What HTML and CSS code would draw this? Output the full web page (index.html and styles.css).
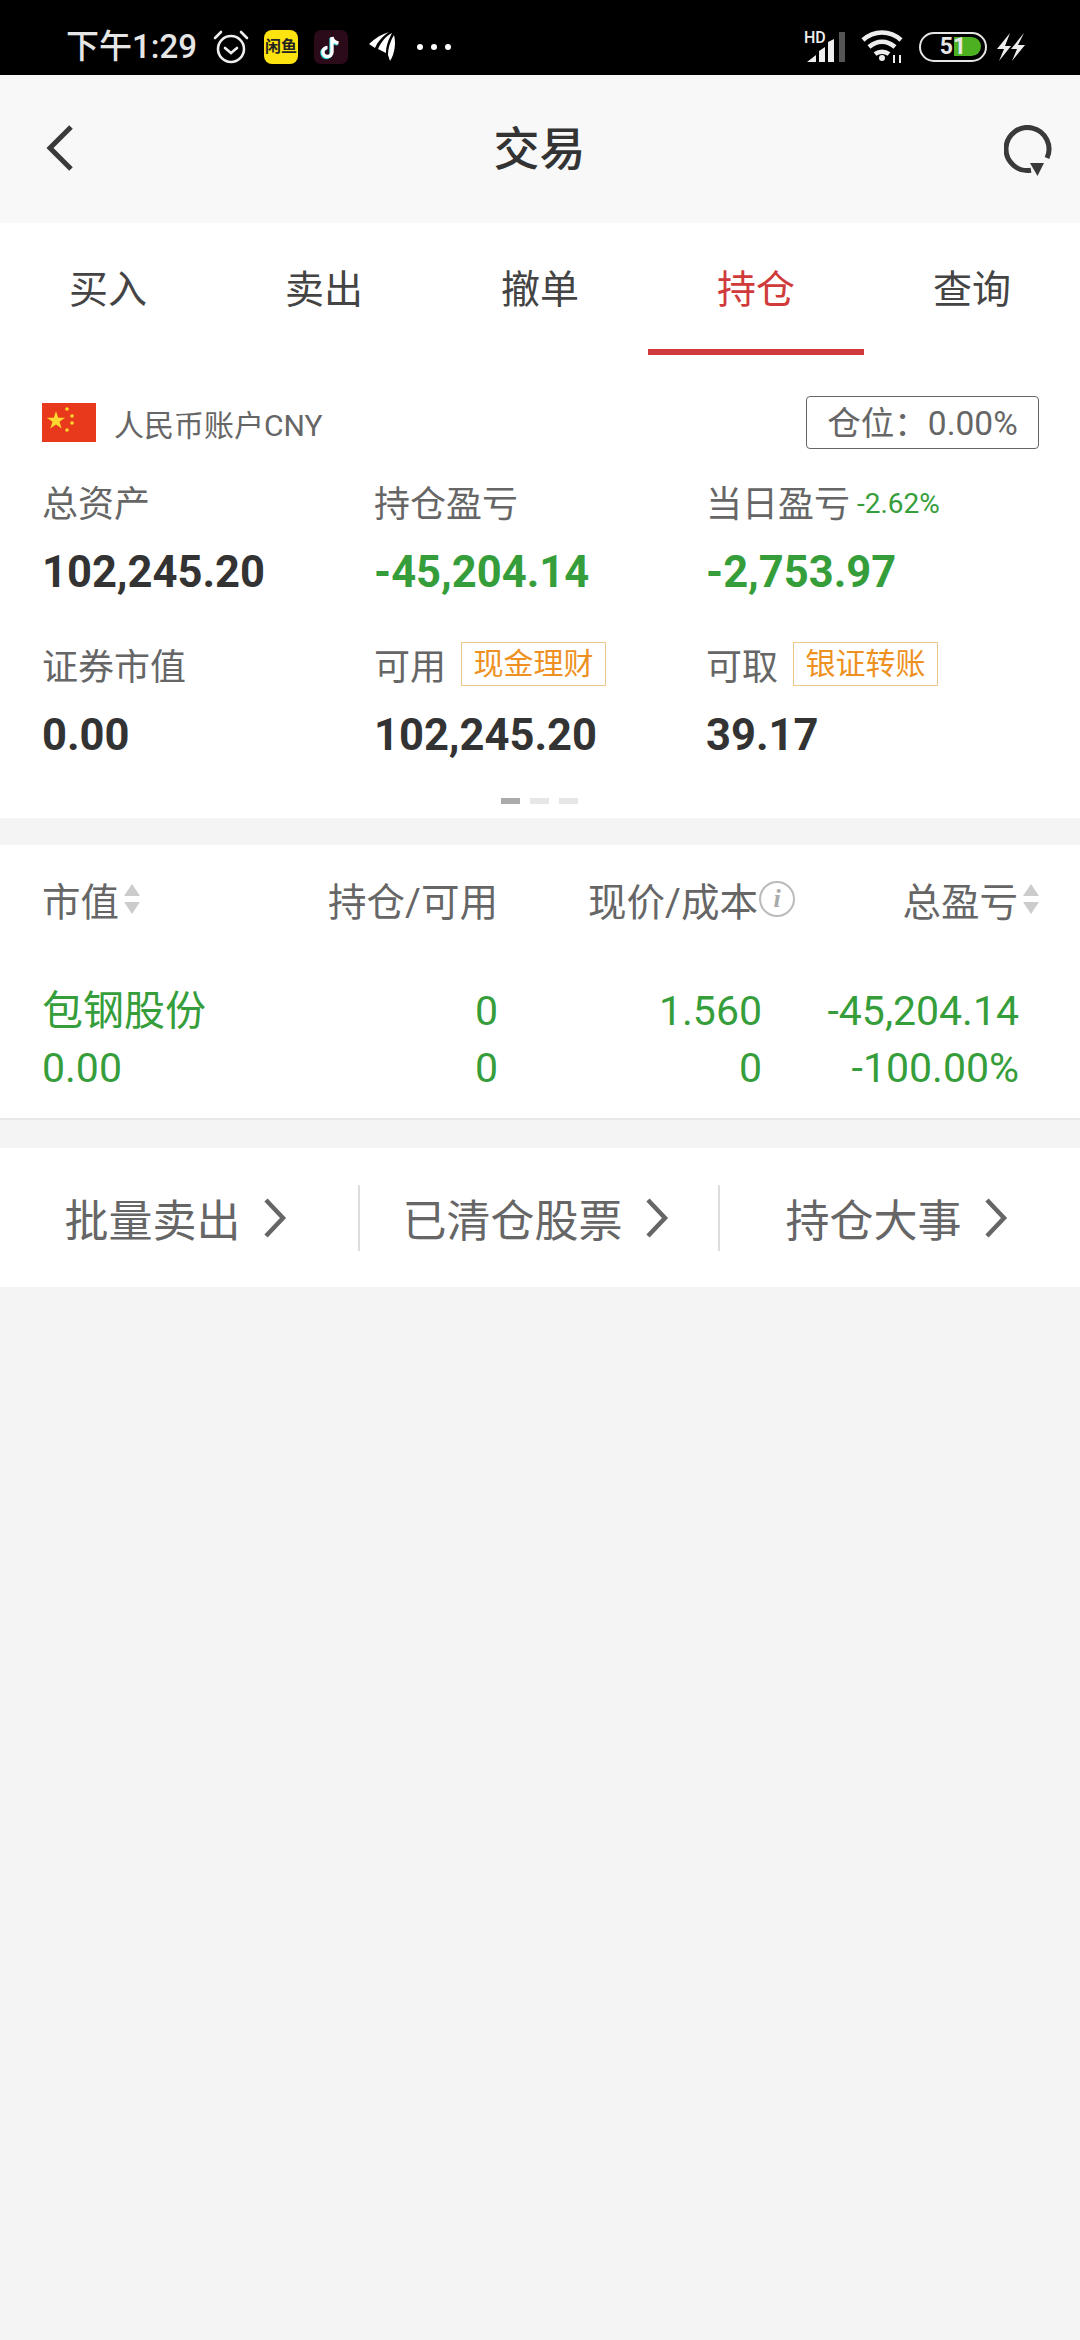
FILE: index.html
```html
<!DOCTYPE html>
<html>
<head>
  <meta charset="UTF-8">
  <title>交易</title>
  <meta name="viewport" content="width=device-width, initial-scale=1.0">
  <link rel="stylesheet" href="styles.css">
</head>
<body>
  <div class="status-bar">
    <span class="clock">下午1:29</span>
    <svg class="st-icon st-alarm" viewBox="0 0 36 36" width="36" height="36" fill="none" stroke="#eee" stroke-width="2.600">
      <circle cx="18" cy="20" r="13"/>
      <path d="M12 19l6 5 6-5M2 9l6-6M34 9l-6-6" stroke-linecap="round"/>
    </svg>
    <span class="st-app st-yellow">闲鱼</span>
    <svg class="st-icon st-tiktok" viewBox="0 0 34 34" width="34" height="34">
      <rect width="34" height="34" rx="7" fill="#2b0a1a"/>
      <path d="M18 7v15a4.500 4.500 0 1 1-4.500-4.500M18 7c.5 3.500 3 5.500 6.500 6" fill="none" stroke="#2cd5dc" stroke-width="3.400" transform="translate(-1 1)"/>
      <path d="M18 7v15a4.500 4.500 0 1 1-4.500-4.500M18 7c.5 3.500 3 5.500 6.500 6" fill="none" stroke="#fff" stroke-width="3.400"/>
    </svg>
    <svg class="st-icon st-wing" viewBox="0 0 28 32" width="28" height="32" fill="#fff">
      <path d="M1 13C7 7 14 3 21 1 15 5 10 10 7 17z"/>
      <path d="M10 18C13 11 18 5 24 2 21 8 18 14 18 22z"/>
      <path d="M20 24C20 16 23 9 26 4 28 12 27 22 22 30z"/>
    </svg>
    <span class="st-more"><i></i><i></i><i></i></span>
    <span class="st-right">
      <span class="st-signal">
        <b>HD</b>
        <svg viewBox="0 0 40 30" width="40" height="30">
          <path d="M1 30l9-7v7zM13 30V19l6-4v15zM22 30V10l6-3v23z" fill="#eee"/>
          <rect x="33" y="0" width="6" height="30" fill="#555"/>
        </svg>
      </span>
      <svg class="st-wifi" viewBox="0 0 46 36" width="46" height="36" fill="none" stroke="#eee" stroke-width="4.500">
        <path d="M3 11C14 1 30 1 41 11M9 18c8-7 18-7 26 0M15 25c4-3 10-3 14 0"/>
        <circle cx="22" cy="29" r="3" fill="#eee" stroke="none"/>
        <path d="M34 34v-8M40 34v-8" stroke-width="2"/>
      </svg>
      <span class="st-battery"><span class="st-charge"></span><span class="st-level">51</span></span>
      <svg class="st-bolt" viewBox="0 0 30 30" width="30" height="30" fill="#eee">
        <path d="M14 1L1 17h7L3 29l12-15H9zM28 1L15 17h6l-5 12 13-16h-7z"/>
      </svg>
    </span>
  </div>

  <div class="nav-bar">
    <svg class="nav-back" viewBox="0 0 30 48" width="30" height="48" fill="none" stroke="#3a3a3a" stroke-width="5">
      <path d="M26 2L5 23l21 21"/>
    </svg>
    <h1>交易</h1>
    <svg class="nav-refresh" viewBox="0 0 50 52" width="50" height="52" fill="none">
      <path d="M27 45.200A21.500 21.500 0 1 1 43 33" stroke="#3a3a3a" stroke-width="5"/>
      <path d="M26 38h14l-6.500 13z" fill="#3a3a3a"/>
    </svg>
  </div>

  <div class="tabs">
    <a>买入</a>
    <a>卖出</a>
    <a>撤单</a>
    <a class="active">持仓</a>
    <a>查询</a>
  </div>

  <section class="account">
    <div class="account-head">
      <svg class="flag" viewBox="0 0 54 39" width="54" height="39">
        <rect width="54" height="39" fill="#e8391c"/>
        <path d="M14 8l2.200 6.700h7l-5.700 4.100 2.200 6.700-5.700-4.100-5.700 4.100 2.200-6.700-5.700-4.100h7z" fill="#fbd92f"/>
        <circle cx="25" cy="6" r="1.800" fill="#fbd92f"/>
        <circle cx="30" cy="13" r="1.800" fill="#fbd92f"/>
        <circle cx="30" cy="20" r="1.800" fill="#fbd92f"/>
        <circle cx="25" cy="27" r="1.800" fill="#fbd92f"/>
      </svg>
      <span class="account-name">人民币账户CNY</span>
      <span class="position">仓位：0.00%</span>
    </div>

    <div class="stats">
      <div class="stat">
        <div class="stat-label">总资产</div>
        <div class="stat-value">102,245.20</div>
      </div>
      <div class="stat">
        <div class="stat-label">持仓盈亏</div>
        <div class="stat-value green">-45,204.14</div>
      </div>
      <div class="stat">
        <div class="stat-label">当日盈亏<small class="green">-2.62%</small></div>
        <div class="stat-value green">-2,753.97</div>
      </div>
      <div class="stat">
        <div class="stat-label">证券市值</div>
        <div class="stat-value">0.00</div>
      </div>
      <div class="stat">
        <div class="stat-label">可用<span class="tag">现金理财</span></div>
        <div class="stat-value">102,245.20</div>
      </div>
      <div class="stat">
        <div class="stat-label">可取<span class="tag">银证转账</span></div>
        <div class="stat-value">39.17</div>
      </div>
    </div>

    <div class="dots"><i class="on"></i><i></i><i></i></div>
  </section>

  <section class="holdings">
    <div class="row row-head">
      <div class="c1">市值<span class="sort"><i class="up"></i><i class="down"></i></span></div>
      <div class="c2">持仓/可用</div>
      <div class="c3">现价/成本<span class="info">i</span></div>
      <div class="c4">总盈亏<span class="sort"><i class="up"></i><i class="down"></i></span></div>
    </div>
    <div class="row row-stock">
      <div class="c1">包钢股份</div>
      <div class="c2">0</div>
      <div class="c3">1.560</div>
      <div class="c4">-45,204.14</div>
    </div>
    <div class="row row-stock">
      <div class="c1">0.00</div>
      <div class="c2">0</div>
      <div class="c3">0</div>
      <div class="c4">-100.00%</div>
    </div>
  </section>

  <div class="actions">
    <a class="action a1">批量卖出<svg viewBox="0 0 24 40" width="24" height="40" fill="none" stroke="#666" stroke-width="4.500"><path d="M3 2l17 18L3 38"/></svg></a>
    <a class="action a2">已清仓股票<svg viewBox="0 0 24 40" width="24" height="40" fill="none" stroke="#666" stroke-width="4.500"><path d="M3 2l17 18L3 38"/></svg></a>
    <a class="action a3">持仓大事<svg viewBox="0 0 24 40" width="24" height="40" fill="none" stroke="#666" stroke-width="4.500"><path d="M3 2l17 18L3 38"/></svg></a>
  </div>
</body>
</html>
```

FILE: styles.css
```css
html, body { margin: 0; padding: 0; }
body {
  width: 1080px;
  height: 2340px;
  overflow: hidden;
  background-color: #f4f4f4;
  color: #666;
  font-family: Roboto, "Noto Sans CJK SC", sans-serif;
}
a { display: block; }

/* status bar */
.status-bar {
  height: 75px;
  box-sizing: border-box;
  background-color: #000;
  display: flex;
  align-items: center;
  padding: 19px 54px 0 66px;
  color: #eee;
}
.clock { width: 147px; font-size: 33px; font-weight: 500; line-height: 40px; color: #e6e6e6; white-space: nowrap; }
.st-icon { display: block; flex: none; }
.st-yellow {
  width: 34px;
  height: 34px;
  margin-left: 15px;
  border-radius: 8px;
  background-color: #fde30f;
  color: #222;
  font-size: 16px;
  font-weight: 700;
  line-height: 34px;
  text-align: center;
  white-space: nowrap;
  overflow: hidden;
}
.st-tiktok { margin-left: 16px; }
.st-wing { margin-left: 20px; }
.st-more { display: flex; gap: 8px; margin-left: 21px; }
.st-more i { width: 6px; height: 6px; border-radius: 50%; background-color: #fff; }
.st-right { margin-left: auto; display: flex; align-items: center; }
.st-signal { position: relative; width: 42px; height: 34px; }
.st-signal b { position: absolute; left: 0; top: 0; font-size: 16px; font-weight: 500; line-height: 16px; color: #eee; }
.st-signal svg { position: absolute; left: 2px; top: 2px; }
.st-wifi { margin-left: 14px; }
.st-battery {
  position: relative;
  width: 68px;
  height: 30px;
  box-sizing: border-box;
  margin-left: 13px;
  border: 2.500px solid #e6e6e6;
  border-radius: 15px;
  overflow: hidden;
}
.st-charge { position: absolute; left: 33px; top: 3px; width: 27px; height: 19px; border-radius: 0 10px 10px 0; background-color: #4cb020; }
.st-level { position: absolute; left: 0; right: 0; top: 0; font-size: 23px; font-weight: 700; line-height: 25px; text-align: center; color: #e6e6e6; }
.st-bolt { margin-left: 9px; }

/* nav bar */
.nav-bar {
  height: 148px;
  background-color: #f8f8f8;
  display: flex;
  align-items: center;
  justify-content: space-between;
  padding: 0 26px 0 45px;
}
.nav-bar h1 { margin: 0; font-size: 46px; font-weight: 500; line-height: 60px; color: #333; }
.nav-back { margin-top: -1px; }
.nav-refresh { margin-top: 4px; }

/* tabs */
.tabs { display: flex; height: 132px; background-color: #fff; }
.tabs a {
  width: 216px;
  height: 132px;
  box-sizing: border-box;
  font-size: 39px;
  line-height: 135px;
  text-align: center;
  color: #444;
}
.tabs a.active { color: #d03a3a; border-bottom: 6px solid #d03a3a; }

/* account */
.account { height: 463px; box-sizing: border-box; background-color: #fff; padding: 41px 41px 0 42px; }
.account-head { display: flex; align-items: center; height: 53px; }
.flag { display: block; flex: none; }
.account-name { margin-left: 18px; font-size: 30px; color: #666; }
.position {
  margin-left: auto;
  width: 233px;
  height: 53px;
  box-sizing: border-box;
  border: 1.500px solid #666;
  border-radius: 4px;
  font-size: 33.500px;
  line-height: 53px;
  text-align: center;
  color: #666;
  white-space: nowrap;
}
.stats { display: grid; grid-template-columns: 332px 332px 1fr; grid-auto-rows: 163px; margin-top: 27px; }
.stat { display: flex; flex-direction: column; }
.stat-label { display: flex; align-items: center; height: 50px; font-size: 36px; color: #666; white-space: nowrap; }
.stat-label small { font-size: 28px; margin-top: 5px; margin-left: 7px; }
.stat-value { margin-top: 22px; font-size: 43.500px; font-weight: 700; line-height: 50px; color: #333; }
.green { color: #359e3b !important; }
.tag {
  margin-left: 15px;
  width: 145px;
  height: 44px;
  box-sizing: border-box;
  border: 1.500px solid #eec78f;
  font-size: 30px;
  line-height: 41px;
  text-align: center;
  color: #ee9122;
}
.dots { display: flex; justify-content: center; gap: 10px; margin-top: -4px; margin-left: -2px; }
.dots i { width: 19px; height: 6px; background-color: #e6e6e6; }
.dots i.on { background-color: #aaa; }

/* holdings table */
.holdings { margin-top: 27px; height: 275px; box-sizing: border-box; background-color: #fff; border-bottom: 2px solid #e8e8e8; padding-top: 17px; }
.row { display: flex; }
.c1 { width: 300px; padding-left: 42px; box-sizing: border-box; display: flex; align-items: center; }
.c2 { width: 198px; text-align: right; }
.c3 { width: 264px; text-align: right; display: flex; align-items: center; justify-content: flex-end; }
.c4 { width: 257px; text-align: right; display: flex; align-items: center; justify-content: flex-end; }
.row-head { height: 74px; align-items: center; font-size: 38.500px; color: #666; margin-bottom: 47px; white-space: nowrap; }
.row-head .c4 { width: 277px; }
.row-stock { height: 57px; align-items: center; font-size: 41px; line-height: 57px; color: #359e3b; }
.sort { display: flex; flex-direction: column; gap: 6px; margin-left: 5px; }
.sort i { width: 0; height: 0; border-left: 8px solid transparent; border-right: 8px solid transparent; }
.sort .up { border-bottom: 12px solid #ccc; }
.sort .down { border-top: 12px solid #ccc; }
.info {
  width: 36px;
  height: 36px;
  flex: none;
  margin-right: -33px;
  margin-left: 1px;
  border: 2px solid #bbb;
  border-radius: 50%;
  box-sizing: border-box;
  font-family: "Liberation Serif", serif;
  font-style: italic;
  font-weight: 700;
  font-size: 26px;
  line-height: 31px;
  text-align: center;
  color: #aaa;
}

/* bottom actions */
.actions { margin-top: 28px; height: 139px; background-color: #fff; display: flex; align-items: center; }
.action { display: flex; align-items: center; justify-content: center; gap: 22px; width: 360px; height: 66px; box-sizing: border-box; padding-right: 7px; font-size: 44px; color: #666; white-space: nowrap; }
.a1, .a2 { border-right: 2px solid #ddd; }
```
